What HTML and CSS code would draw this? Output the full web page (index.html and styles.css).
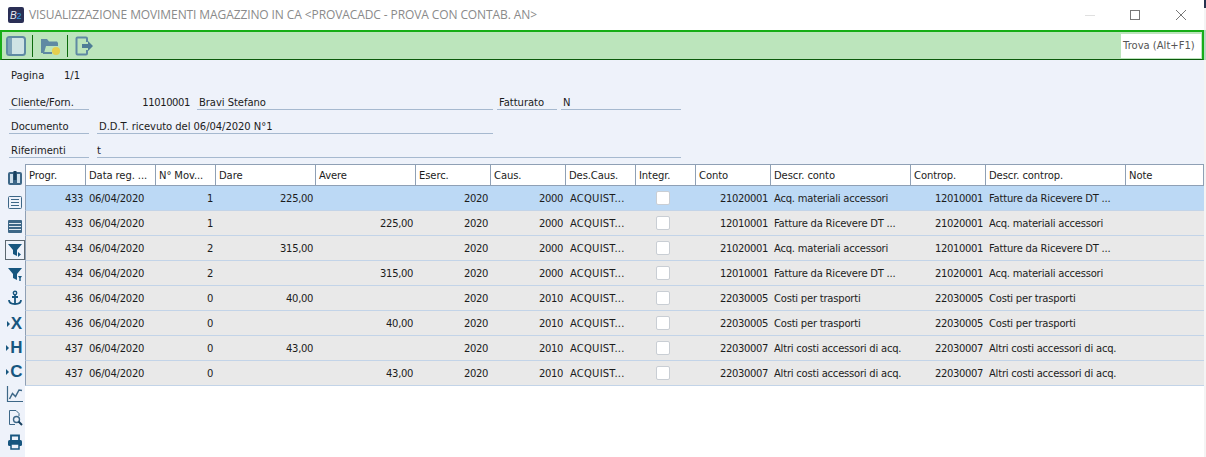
FILE: index.html
```html
<!DOCTYPE html>
<html lang="it">
<head>
<meta charset="utf-8">
<title>Visualizzazione movimenti magazzino</title>
<link rel="stylesheet" href="styles.css">
</head>
<body>
<div class="window">
  <header class="titlebar">
    <svg class="app-logo" width="16" height="16" viewBox="0 0 16 16"><rect width="16" height="16" rx="2" fill="#2a2f55"/><text x="2" y="12" font-size="10" font-style="italic" font-family="Liberation Sans" fill="#e8e8f0">B</text><text x="8.500" y="12" font-size="9" font-family="Liberation Sans" fill="#35a4e8">2</text></svg>
    <span class="title">VISUALIZZAZIONE MOVIMENTI MAGAZZINO IN CA &lt;PROVACADC - PROVA CON CONTAB. AN&gt;</span>
    <div class="win-controls">
      <svg width="12" height="12" viewBox="0 0 12 12"><path d="M2 6.500h10" stroke="#e0e0e0" fill="none"/></svg>
      <svg width="12" height="12" viewBox="0 0 12 12"><rect x="1.500" y="1.500" width="9" height="9" stroke="#777" fill="none"/></svg>
      <svg width="12" height="12" viewBox="0 0 12 12"><path d="M1 1l10 10M11 1L1 11" stroke="#777" fill="none"/></svg>
    </div>
  </header>

  <div class="toolbar">
    <svg class="tool" width="22" height="22" viewBox="0 0 22 22"><rect x="2" y="2" width="18" height="18" rx="2.500" fill="#cfe3e4" stroke="#5f8aa3" stroke-width="2"/><rect x="3" y="3" width="4" height="16" fill="#7ea3b8"/></svg>
    <span class="tool-sep"></span>
    <svg class="tool" width="24" height="22" viewBox="0 0 24 22"><path d="M3 18V4h6l2 2.500h8l1 1.500v3H8L6 18z" fill="#5f8aa3"/><path d="M5 18h9" stroke="#5f8aa3" stroke-width="2"/><circle cx="18" cy="16" r="4" fill="#e6cf4f"/></svg>
    <span class="tool-sep"></span>
    <svg class="tool" width="22" height="22" viewBox="0 0 22 22"><path d="M14 7V3.500a1 1 0 0 0-1-1H4.500a1 1 0 0 0-1 1v15a1 1 0 0 0 1 1H13a1 1 0 0 0 1-1V15" fill="none" stroke="#5f8aa3" stroke-width="2"/><path d="M9 9h6V6l5 5-5 5v-3H9z" fill="#4f7d96"/></svg>
    <div class="find">Trova (Alt+F1)</div>
  </div>

  <section class="form">
    <div class="row row-page"><span class="plain lbl">Pagina</span><span class="plain">1/1</span></div>
    <div class="row">
      <span class="field w80">Cliente/Forn.</span>
      <span class="code">11010001</span>
      <span class="field w296">Bravi Stefano</span>
      <span class="field w60 gap4">Fatturato</span>
      <span class="field w120 gap4">N</span>
    </div>
    <div class="row">
      <span class="field w80">Documento</span>
      <span class="field w396 gap8">D.D.T. ricevuto del 06/04/2020 N°1</span>
    </div>
    <div class="row">
      <span class="field w80">Riferimenti</span>
      <span class="field w584 gap8 tight">t</span>
    </div>
  </section>

  <div class="main">
    <aside class="side">
      <svg width="16" height="16" viewBox="0 0 16 16"><rect x="1" y="2" width="14" height="13" rx="2" fill="#3d6787"/><rect x="3" y="4" width="3" height="9" fill="#cfe0ec"/><rect x="10" y="4" width="3" height="9" fill="#cfe0ec"/><rect x="6.500" y="1" width="3" height="9" fill="#17405f"/></svg>
      <svg width="16" height="16" viewBox="0 0 16 16"><rect x="1.500" y="2.500" width="13" height="12" rx="1" fill="none" stroke="#3d6787"/><path d="M4 5.500h8M4 8.500h8M4 11.500h8" stroke="#3d6787"/></svg>
      <svg width="16" height="16" viewBox="0 0 16 16"><rect x="1" y="2" width="14" height="13" rx="1" fill="#3d6787"/><path d="M2 5.500h12M2 8.500h12M2 11.500h12" stroke="#dfe8f0"/></svg>
      <span class="side-on"><svg width="16" height="16" viewBox="0 0 16 16"><path d="M1 2h14L10 8v6l-4-2V8z" fill="#17567f"/><path d="M11 10l3 2.500-3 2.500z" fill="#17567f"/></svg></span>
      <svg width="16" height="16" viewBox="0 0 16 16"><path d="M1 2h14L10 8v6l-4-2V8z" fill="#17567f"/><path d="M11 10h4l-1.300 2v3h-1.400v-3z" fill="#17567f"/></svg>
      <svg width="16" height="16" viewBox="0 0 16 16"><circle cx="8" cy="3" r="1.700" fill="none" stroke="#17567f" stroke-width="1.400"/><path d="M8 5v9M5 7h6M2 10c0 3 3 4 6 4s6-1 6-4" fill="none" stroke="#17567f" stroke-width="1.800"/></svg>
      <span class="letter"><i></i>X</span>
      <span class="letter"><i></i>H</span>
      <span class="letter"><i></i>C</span>
      <svg class="big" width="18" height="18" viewBox="0 0 18 18"><path d="M1.500 1v15.500H17" fill="none" stroke="#3d6787" stroke-width="1.200"/><path d="M3.500 14l3-5.500 3 3L13 5l3 .5" fill="none" stroke="#3d6787" stroke-width="1.500"/></svg>
      <svg class="big" width="18" height="18" viewBox="0 0 18 18"><path d="M9 15.500H3.500v-14H10l3 3V7" fill="none" stroke="#3d6787"/><circle cx="10.500" cy="10.500" r="3" fill="none" stroke="#3d6787" stroke-width="1.400"/><path d="M12.500 12.500l3.500 3.500" stroke="#17405f" stroke-width="2"/></svg>
      <svg class="big" width="18" height="18" viewBox="0 0 18 18"><path d="M5 7V2.500h8V7" fill="none" stroke="#17567f" stroke-width="1.800"/><rect x="2" y="7" width="14" height="6" rx="1.500" fill="#17567f"/><path d="M5 11h8v5H5z" fill="#eef2fa" stroke="#17567f" stroke-width="1.500"/></svg>
    </aside>

    <div class="grid">
      <div class="tr th">
        <span>Progr.</span><span>Data reg. ...</span><span>N° Mov...</span><span>Dare</span><span>Avere</span><span>Eserc.</span><span>Caus.</span><span>Des.Caus.</span><span>Integr.</span><span>Conto</span><span>Descr. conto</span><span>Controp.</span><span>Descr. controp.</span><span>Note</span>
      </div>
      <div class="tr sel"><span class="r">433</span><span class="d">06/04/2020</span><span class="r">1</span><span class="r">225,00</span><span class="r"></span><span class="r">2020</span><span class="r">2000</span><span class="a">ACQUIST...</span><span class="c"><b></b></span><span class="r">21020001</span><span class="t">Acq. materiali accessori</span><span class="r">12010001</span><span class="t">Fatture da Ricevere DT ...</span><span></span></div>
      <div class="tr"><span class="r">433</span><span class="d">06/04/2020</span><span class="r">1</span><span class="r"></span><span class="r">225,00</span><span class="r">2020</span><span class="r">2000</span><span class="a">ACQUIST...</span><span class="c"><b></b></span><span class="r">12010001</span><span class="t">Fatture da Ricevere DT ...</span><span class="r">21020001</span><span class="t">Acq. materiali accessori</span><span></span></div>
      <div class="tr"><span class="r">434</span><span class="d">06/04/2020</span><span class="r">2</span><span class="r">315,00</span><span class="r"></span><span class="r">2020</span><span class="r">2000</span><span class="a">ACQUIST...</span><span class="c"><b></b></span><span class="r">21020001</span><span class="t">Acq. materiali accessori</span><span class="r">12010001</span><span class="t">Fatture da Ricevere DT ...</span><span></span></div>
      <div class="tr"><span class="r">434</span><span class="d">06/04/2020</span><span class="r">2</span><span class="r"></span><span class="r">315,00</span><span class="r">2020</span><span class="r">2000</span><span class="a">ACQUIST...</span><span class="c"><b></b></span><span class="r">12010001</span><span class="t">Fatture da Ricevere DT ...</span><span class="r">21020001</span><span class="t">Acq. materiali accessori</span><span></span></div>
      <div class="tr"><span class="r">436</span><span class="d">06/04/2020</span><span class="r">0</span><span class="r">40,00</span><span class="r"></span><span class="r">2020</span><span class="r">2010</span><span class="a">ACQUIST...</span><span class="c"><b></b></span><span class="r">22030005</span><span class="t">Costi per trasporti</span><span class="r">22030005</span><span class="t">Costi per trasporti</span><span></span></div>
      <div class="tr"><span class="r">436</span><span class="d">06/04/2020</span><span class="r">0</span><span class="r"></span><span class="r">40,00</span><span class="r">2020</span><span class="r">2010</span><span class="a">ACQUIST...</span><span class="c"><b></b></span><span class="r">22030005</span><span class="t">Costi per trasporti</span><span class="r">22030005</span><span class="t">Costi per trasporti</span><span></span></div>
      <div class="tr"><span class="r">437</span><span class="d">06/04/2020</span><span class="r">0</span><span class="r">43,00</span><span class="r"></span><span class="r">2020</span><span class="r">2010</span><span class="a">ACQUIST...</span><span class="c"><b></b></span><span class="r">22030007</span><span class="t">Altri costi accessori di acq.</span><span class="r">22030007</span><span class="t">Altri costi accessori di acq.</span><span></span></div>
      <div class="tr"><span class="r">437</span><span class="d">06/04/2020</span><span class="r">0</span><span class="r"></span><span class="r">43,00</span><span class="r">2020</span><span class="r">2010</span><span class="a">ACQUIST...</span><span class="c"><b></b></span><span class="r">22030007</span><span class="t">Altri costi accessori di acq.</span><span class="r">22030007</span><span class="t">Altri costi accessori di acq.</span><span></span></div>
    </div>
  </div>
</div>
<div class="backdrop"></div>
</body>
</html>
```

FILE: styles.css
```css
* { box-sizing: border-box; }
html, body { margin: 0; height: 100%; overflow: hidden; }
body { display: flex; background: #fff; font-family: "DejaVu Sans", sans-serif; font-size: 10px; color: #1c1c1c; }
.window { width: 1204px; height: 457px; flex: none; display: flex; flex-direction: column; background: #fff; }
.backdrop { flex: 1; background: linear-gradient(#26334f 0 8px, #f4f4f4 8px 30px, #b9d4c0 30px 60px, #f4f4f4 60px); }

.titlebar { height: 30px; display: flex; align-items: center; padding: 0 0 1px 8px; }
.app-logo { flex: none; }
.title { margin-left: 5px; font-family: "Open Sans", sans-serif; font-size: 12px; letter-spacing: -0.1px; color: #8a8a8a; }
.win-controls { margin-left: auto; display: flex; gap: 34px; padding-right: 17px; }

.toolbar { height: 30px; display: flex; align-items: center; gap: 5px; padding: 0 1px 0 3px; background: #bce5bc; border: 2px solid #17ad17; border-bottom: 1px solid #0c5a0c; }
.tool { flex: none; }
.tool-sep { width: 1px; height: 22px; background: #0c6a0c; }
.find { margin-left: auto; width: 80px; height: 24px; background: #fff; line-height: 24px; padding-left: 2px; color: #555; }

.form { height: 104px; background: #eef2fa; padding: 0 9px; flex: none; }
.row { display: flex; height: 24px; }
.row-page { height: 28px; padding-top: 9px; align-items: flex-start; padding-left: 2px; margin-bottom: -1px; }
.plain { line-height: 14px; }
.lbl { width: 53px; }
.field { display: block; height: 23px; padding: 9px 2px 0; line-height: 14px; letter-spacing: -0.05px; border-bottom: 1px solid #a6b9cf; white-space: nowrap; }
.code { width: 101px; padding: 9px 0 0; text-align: right; line-height: 14px; letter-spacing: -0.4px; }
.w80 { width: 80px; }
.w296 { width: 296px; margin-left: 7px; }
.w60 { width: 60px; }
.w120 { width: 120px; }
.w396 { width: 396px; }
.w584 { width: 584px; }
.gap4 { margin-left: 4px; }
.gap8 { margin-left: 8px; }
.tight { padding-left: 0; }

.main { flex: 1; display: flex; min-height: 0; }
.side { width: 25px; flex: none; background: #eef2fa; display: flex; flex-direction: column; align-items: center; padding: 6px 0 0 4px; gap: 8px; }
.side svg { display: block; flex: none; }
.side .big { margin: -1px 0; }
.side-on { width: 20px; height: 20px; margin: -2px 0; flex: none; display: flex; align-items: center; justify-content: center; border: 1px solid #5b6770; }
.letter { height: 16px; width: 18px; flex: none; padding-top: 3px; display: flex; align-items: center; justify-content: center; font: bold 17px/16px "Liberation Sans", sans-serif; color: #17567f; }
.letter i { width: 0; height: 0; margin-right: 1px; border-left: 3px solid #17567f; border-top: 3px solid transparent; border-bottom: 3px solid transparent; }

.grid { flex: 1; min-width: 0; }
.tr { display: grid; grid-template-columns: 60px 70px 60px 100px 100px 75px 75px 70px 60px 75px 140px 75px 140px 1fr; height: 25px; background: #e9e9e9; border-left: 1px solid #8fa0b5; border-bottom: 1px solid #c3d4e8; }
.tr span { line-height: 26px; padding: 0 3px; letter-spacing: -0.1px; white-space: nowrap; overflow: hidden; }
.tr .r { text-align: right; letter-spacing: -0.35px; }
.tr .d { letter-spacing: -0.25px; }
.tr .t { letter-spacing: -0.22px; }
.tr .a { padding-left: 4px; letter-spacing: 0.2px; }
.tr .c { display: flex; align-items: center; padding-right: 9px; justify-content: center; }
.tr b { display: block; width: 14px; height: 14px; background: #fff; border: 1px solid #c9ced4; border-radius: 2px; }
.sel { background: #bcd9f5; }
.th { height: 22px; background: #fff; border: 1px solid #8fa0b5; }
.th span { line-height: 21px; border-right: 1px solid #8fa0b5; }
.th span:last-child { border-right: 0; }
```
